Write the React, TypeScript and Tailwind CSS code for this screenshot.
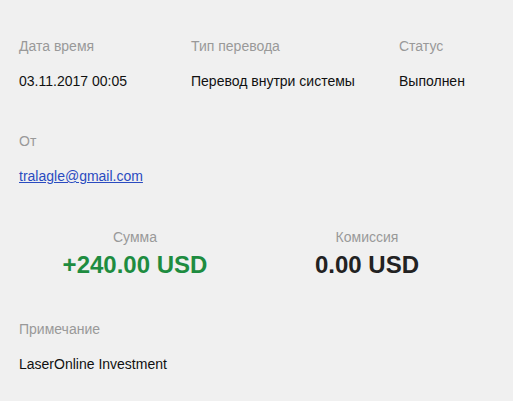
export default function App() {
  return (
    <div className="min-h-[401px] w-full bg-[#f0f0f0] px-[19px] pt-[36px] text-[14px] leading-[20px] text-[#111] [font-family:'Liberation_Sans',Arial,sans-serif]">
      <div className="grid grid-cols-[172px_208px_1fr] gap-y-[15px]">
        <div className="text-[#999]">Дата время</div>
        <div className="text-[#999]">Тип перевода</div>
        <div className="text-[#999]">Статус</div>
        <div>03.11.2017 00:05</div>
        <div>Перевод внутри системы</div>
        <div>Выполнен</div>
      </div>
      <div className="mt-[40px] text-[#999]">От</div>
      <div className="mt-[15px]">
        <a href="#" className="text-[#2a4bc0] underline">tralagle@gmail.com</a>
      </div>
      <div className="mt-[41px] grid w-[464px] grid-cols-2 text-center">
        <div>
          <div className="text-[#999]">Сумма</div>
          <div className="mt-[3px] text-[24px] font-bold leading-[30px] text-[#1e8c40]">+240.00 USD</div>
        </div>
        <div>
          <div className="text-[#999]">Комиссия</div>
          <div className="mt-[3px] text-[24px] font-bold leading-[30px] text-[#222]">0.00 USD</div>
        </div>
      </div>
      <div className="mt-[39px] text-[#999]">Примечание</div>
      <div className="mt-[15px]">LaserOnline Investment</div>
    </div>
  )
}
